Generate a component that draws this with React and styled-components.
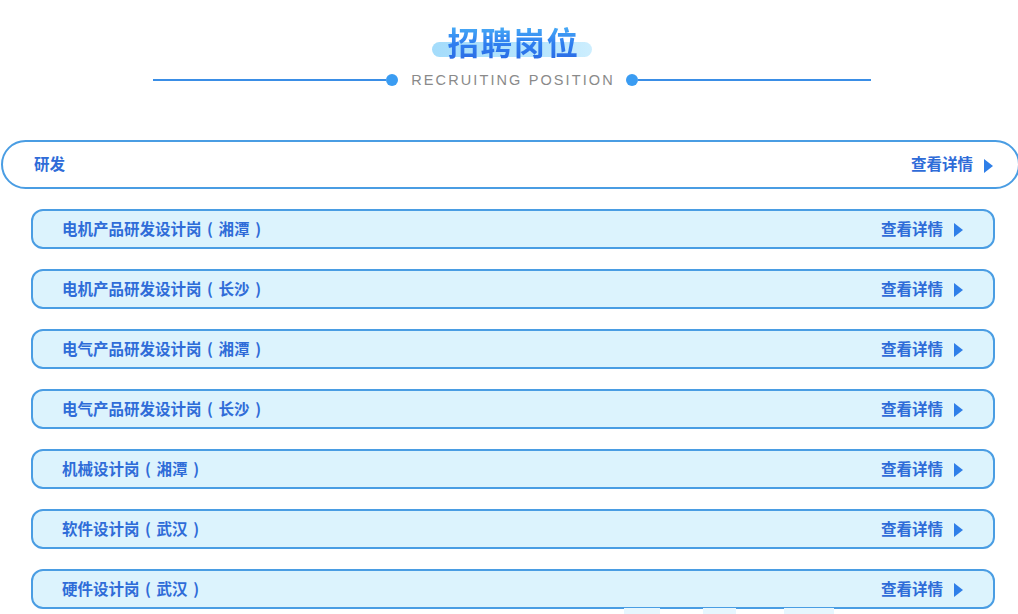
import React from "react";
import styled, { createGlobalStyle } from "styled-components";

const Global = createGlobalStyle`
  html, body { margin: 0; padding: 0; background: #fff; }
  body { font-family: "Noto Sans CJK SC", "Noto Sans", sans-serif; overflow: hidden; }
`;

const Page = styled.div`
  width: 1018px;
  height: 614px;
  position: relative;
  overflow: hidden;
`;

const Header = styled.header`
  display: flex;
  flex-direction: column;
  align-items: center;
  padding-top: 19px;
  padding-left: 6px;
`;

const TitleWrap = styled.div`
  position: relative;
  display: flex;
  justify-content: center;
  width: 160px;
  height: 44px;
`;

const Pill = styled.div`
  position: absolute;
  left: 0;
  bottom: 6px;
  width: 160px;
  height: 15px;
  border-radius: 8px;
  background: linear-gradient(90deg, #a4dcfb 0%, #b9e6fd 70%, #cdeefe 100%);
`;

const Title = styled.h1`
  position: relative;
  margin: 0;
  font-size: 31.5px;
  line-height: 44px;
  font-weight: 700;
  letter-spacing: 1.5px;
  padding-left: 3px;
  background: linear-gradient(180deg, #4db4f7 10%, #2f7ff0 55%, #2a68e2 100%);
  -webkit-background-clip: text;
  background-clip: text;
  color: transparent;
`;

const SubRow = styled.div`
  display: flex;
  align-items: center;
  margin-top: 9px;
  margin-left: -6px;
  padding-left: 6px;
`;

const Line = styled.div`
  width: 233px;
  height: 2px;
  background: #3a8ee6;
`;

const Dot = styled.div`
  width: 12px;
  height: 12px;
  border-radius: 50%;
  background: #3a9cf2;
  flex-shrink: 0;
`;

const SubText = styled.span`
  font-family: "Liberation Sans", Arial, sans-serif;
  font-size: 14.5px;
  letter-spacing: 2.1px;
  color: #8a8a8a;
  margin: 0 11px 0 13px;
`;

const List = styled.div`
  display: flex;
  flex-direction: column;
  margin-top: 52px;
`;

const Category = styled.div`
  display: flex;
  align-items: center;
  justify-content: space-between;
  box-sizing: border-box;
  height: 49px;
  width: 1019px;
  margin-left: 1px;
  padding: 0 25px 1px 31px;
  border: 2px solid #4a9de3;
  border-radius: 25px;
  background: #fff;
`;

const Job = styled.div`
  display: flex;
  align-items: center;
  justify-content: space-between;
  box-sizing: border-box;
  height: 40px;
  width: 964px;
  margin-left: 31px;
  margin-top: 20px;
  padding: 0 30px 1px 29px;
  border: 2px solid #4a9de3;
  border-radius: 12px;
  background: #dcf3fd;
`;

const Name = styled.span`
  font-size: 15.5px;
  line-height: 1;
  font-weight: 700;
  color: #2f6cd8;
`;

const Paren = styled.span`
  display: inline-block;
  width: 1.1em;
  text-align: center;
  font-weight: 700;
`;

const More = styled.span`
  display: flex;
  align-items: center;
  gap: 11px;
  font-size: 15.5px;
  line-height: 1;
  font-weight: 700;
  color: #2f6cd8;
`;

const ArrowIcon = styled.svg`
  margin-top: 3px;
`;

const Arrow = () => (
  <ArrowIcon width="9" height="14" viewBox="0 0 9 14">
    <path d="M0 0 L9 7 L0 14 Z" fill="#2f7fe8" />
  </ArrowIcon>
);

const Deco = styled.div`
  position: absolute;
  bottom: 0;
  height: 6px;
  background: #e6f6fe;
`;

const jobs = [
  ["电机产品研发设计岗", "湘潭"],
  ["电机产品研发设计岗", "长沙"],
  ["电气产品研发设计岗", "湘潭"],
  ["电气产品研发设计岗", "长沙"],
  ["机械设计岗", "湘潭"],
  ["软件设计岗", "武汉"],
  ["硬件设计岗", "武汉"],
];

export default function App() {
  return (
    <Page>
      <Global />
      <Header>
        <TitleWrap>
          <Pill />
          <Title>招聘岗位</Title>
        </TitleWrap>
        <SubRow>
          <Line />
          <Dot />
          <SubText>RECRUITING POSITION</SubText>
          <Dot />
          <Line />
        </SubRow>
      </Header>
      <List>
        <Category>
          <Name>研发</Name>
          <More>
            查看详情
            <Arrow />
          </More>
        </Category>
        {jobs.map(([n, c]) => (
          <Job key={n + c}>
            <Name>
              {n}
              <Paren>(</Paren>
              {c}
              <Paren>)</Paren>
            </Name>
            <More>
              查看详情
              <Arrow />
            </More>
          </Job>
        ))}
      </List>
      <Deco style={{ left: 624, width: 36 }} />
      <Deco style={{ left: 703, width: 33 }} />
      <Deco style={{ left: 784, width: 50 }} />
    </Page>
  );
}
